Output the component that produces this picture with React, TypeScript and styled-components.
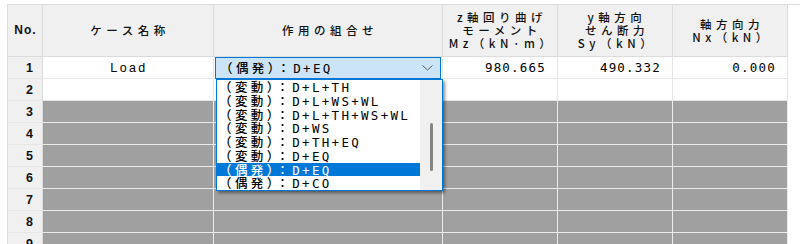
import styled, { createGlobalStyle } from "styled-components";

const GlobalStyle = createGlobalStyle`
  html, body {
    margin: 0;
    padding: 0;
    background: #ffffff;
  }
  body {
    width: 800px;
    height: 244px;
    overflow: hidden;
  }
`;

const COLUMNS = "36px 171px 229px 115px 115px 115px";
const LINE = "#dcdcdc";
const CJK = `"Noto Sans CJK JP", sans-serif`;
const MONO = `"DejaVu Sans Mono", "Noto Sans CJK JP", monospace`;
const ITEM_H = 13.75;

const OPTIONS = [
  { kind: "（変動）：", formula: "D+L+TH" },
  { kind: "（変動）：", formula: "D+L+WS+WL" },
  { kind: "（変動）：", formula: "D+L+TH+WS+WL" },
  { kind: "（変動）：", formula: "D+WS" },
  { kind: "（変動）：", formula: "D+TH+EQ" },
  { kind: "（変動）：", formula: "D+EQ" },
  { kind: "（偶発）：", formula: "D+EQ" },
  { kind: "（偶発）：", formula: "D+CO" },
];
const SELECTED = 6;

const Frame = styled.div`
  margin: 4px 0 0 7px;
  border-top: 1px solid ${LINE};
  height: 239px;
  overflow: hidden;
`;

const Grid = styled.div`
  display: grid;
  grid-template-columns: ${COLUMNS};
  grid-template-rows: 52px;
  grid-auto-rows: 22px;
  width: max-content;
`;

const HeaderCell = styled.div<{ $first?: boolean }>`
  box-sizing: border-box;
  background: #f0f0f0;
  border-right: 1px solid ${LINE};
  border-bottom: 1px solid ${LINE};
  border-left: ${(p) => (p.$first ? `1px solid ${LINE}` : "none")};
  display: flex;
  flex-direction: column;
  align-items: center;
  justify-content: center;
  font-family: ${CJK};
  font-size: 11.5px;
  font-weight: 500;
  line-height: 13px;
  letter-spacing: 4.5px;
  color: #111;
  text-align: center;
  padding-left: 4px;
`;

const HeaderLine = styled.span`
  display: block;
  height: 13px;
  line-height: 13px;
  white-space: nowrap;
`;

const IndexHeader = styled(HeaderCell)`
  font-family: "Liberation Sans", sans-serif;
  font-size: 12px;
  font-weight: bold;
  letter-spacing: 1px;
  padding-left: 1px;
`;

const IndexCell = styled.div`
  box-sizing: border-box;
  background: #f0f0f0;
  border-left: 1px solid ${LINE};
  border-right: 1px solid ${LINE};
  border-bottom: 1px solid #e6e6e6;
  display: flex;
  align-items: center;
  justify-content: flex-end;
  padding-right: 9px;
  font-family: "Liberation Sans", sans-serif;
  font-weight: bold;
  font-size: 12.5px;
  color: #111;
`;

const Cell = styled.div<{ $disabled?: boolean; $align?: "center" | "right" }>`
  position: relative;
  box-sizing: border-box;
  background: ${(p) => (p.$disabled ? "#a0a0a0" : "#ffffff")};
  border-right: 1px solid ${(p) => (p.$disabled ? "#ebebeb" : "#e6e6e6")};
  border-bottom: 1px solid ${(p) => (p.$disabled ? "#ebebeb" : "#e6e6e6")};
  display: flex;
  align-items: center;
  justify-content: ${(p) => (p.$align === "right" ? "flex-end" : "center")};
  padding-right: ${(p) => (p.$align === "right" ? "11px" : "0")};
  color: #000;
`;

const NameText = styled.span`
  font-family: "Liberation Sans", sans-serif;
  font-size: 12.5px;
  letter-spacing: 2.4px;
  padding-left: 2px;
`;

const NumberText = styled.span`
  font-family: ${MONO};
  font-size: 12.5px;
  letter-spacing: 1.2px;
`;

const ComboCell = styled.div`
  position: relative;
  box-sizing: border-box;
  border-right: 1px solid #e6e6e6;
  border-bottom: 1px solid #e6e6e6;
  padding: 0 1px 0 1px;
  z-index: 2;
`;

const Select = styled.div`
  position: relative;
  box-sizing: border-box;
  height: 22px;
  border: 1px solid #0078d7;
  background: #cce4f7;
  display: flex;
  align-items: center;
  justify-content: space-between;
  padding: 0 7px 0 4px;
  color: #000;
`;

const OptionText = styled.span`
  font-family: ${MONO};
  font-size: 12.5px;
  line-height: ${ITEM_H}px;
  letter-spacing: 2.3px;
  white-space: nowrap;
  color: inherit;
`;

const Prefix = styled.span`
  font-family: ${CJK};
  font-weight: 500;
  letter-spacing: 3.4px;
`;

const Chevron = styled.svg`
  width: 11px;
  height: 6px;
  flex: none;
`;

const List = styled.div`
  position: absolute;
  top: 21px;
  left: 0;
  width: 227px;
  height: 112px;
  box-sizing: border-box;
  border: 1px solid #0078d7;
  background: #ffffff;
  box-shadow: 2px 2px 3px rgba(0, 0, 0, 0.45);
  display: flex;
`;

const Items = styled.div`
  flex: 1;
  display: flex;
  flex-direction: column;
`;

const Item = styled.div<{ $selected?: boolean }>`
  height: ${ITEM_H}px;
  line-height: ${ITEM_H}px;
  padding-left: 2px;
  background: ${(p) => (p.$selected ? "#0078d7" : "transparent")};
  color: ${(p) => (p.$selected ? "#ffffff" : "#000000")};
`;

const Track = styled.div`
  width: 22px;
  background: #f0f0f0;
  position: relative;
`;

const Thumb = styled.div`
  position: absolute;
  left: 10px;
  top: 43px;
  width: 3px;
  height: 48px;
  border-radius: 1.5px;
  background: #858585;
`;

const Option = ({ kind, formula }: { kind: string; formula: string }) => (
  <OptionText>
    <Prefix>{kind}</Prefix>
    {formula}
  </OptionText>
);

const App = () => {
  const rows = Array.from({ length: 9 }, (_, i) => i + 1);
  return (
    <>
      <GlobalStyle />
      <Frame>
        <Grid>
          <IndexHeader $first>No.</IndexHeader>
          <HeaderCell>ケース名称</HeaderCell>
          <HeaderCell>作用の組合せ</HeaderCell>
          <HeaderCell>
            <HeaderLine>z軸回り曲げ</HeaderLine>
            <HeaderLine>モーメント</HeaderLine>
            <HeaderLine>Mz（kN·m）</HeaderLine>
          </HeaderCell>
          <HeaderCell>
            <HeaderLine>y軸方向</HeaderLine>
            <HeaderLine>せん断力</HeaderLine>
            <HeaderLine>Sy（kN）</HeaderLine>
          </HeaderCell>
          <HeaderCell>
            <HeaderLine>軸方向力</HeaderLine>
            <HeaderLine>Nx（kN）</HeaderLine>
          </HeaderCell>

          {rows.map((n) => {
            if (n === 1) {
              return [
                <IndexCell key="i1">1</IndexCell>,
                <Cell key="n1">
                  <NameText>Load</NameText>
                </Cell>,
                <ComboCell key="c1">
                  <Select>
                    <Option {...OPTIONS[SELECTED]} />
                    <Chevron viewBox="0 0 11 6">
                      <path d="M0.5 0.5 L5.5 5 L10.5 0.5" fill="none" stroke="#5a5a5a" strokeWidth="1" />
                    </Chevron>
                    <List>
                      <Items>
                        {OPTIONS.map((o, i) => (
                          <Item key={i} $selected={i === SELECTED}>
                            <Option {...o} />
                          </Item>
                        ))}
                      </Items>
                      <Track>
                        <Thumb />
                      </Track>
                    </List>
                  </Select>
                </ComboCell>,
                <Cell key="m1" $align="right">
                  <NumberText>980.665</NumberText>
                </Cell>,
                <Cell key="s1" $align="right">
                  <NumberText>490.332</NumberText>
                </Cell>,
                <Cell key="x1" $align="right">
                  <NumberText>0.000</NumberText>
                </Cell>,
              ];
            }
            const disabled = n > 2;
            return [
              <IndexCell key={`i${n}`}>{n}</IndexCell>,
              ...[0, 1, 2, 3, 4].map((c) => <Cell key={`c${n}-${c}`} $disabled={disabled} />),
            ];
          })}
        </Grid>
      </Frame>
    </>
  );
};

export default App;
